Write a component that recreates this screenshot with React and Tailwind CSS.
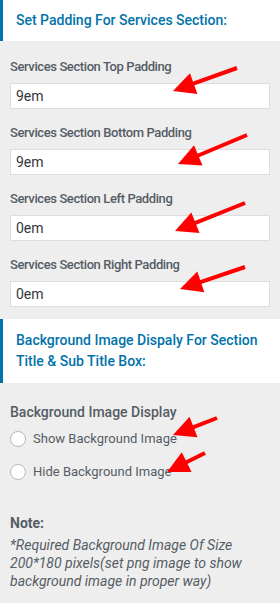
import React from "react";

const arrows = [
  [237, 68, 173, 91],
  [247, 135, 178, 164],
  [245, 203, 175, 231],
  [245, 267, 180, 289],
  [217, 418, 173, 435],
  [205, 453, 167, 472],
];

function Arrow({ t }) {
  const [tx, ty, px, py] = t;
  const dx = tx - px;
  const dy = ty - py;
  const len = Math.hypot(dx, dy);
  const ux = dx / len;
  const uy = dy / len;
  const hl = 22;
  const hw = 11;
  const bx = px + ux * hl;
  const by = py + uy * hl;
  const nx = -uy;
  const ny = ux;
  const pts = `${px},${py} ${bx + nx * hw},${by + ny * hw} ${bx - nx * hw},${by - ny * hw}`;
  return (
    <g>
      <line x1={tx} y1={ty} x2={bx - ux * 2} y2={by - uy * 2} stroke="#ff0000" strokeWidth="4" />
      <polygon points={pts} fill="#ff0000" />
    </g>
  );
}

function Field({ label, value }) {
  return (
    <div className="flex flex-col">
      <div className="text-[13px] tracking-[-0.4px] leading-[20px] font-medium text-[#555d66]">{label}</div>
      <div className="mt-[6px] h-[26px] bg-white border border-[#dddddd] flex items-center px-[5px] text-[14px] text-[#32373c]">
        {value}
      </div>
    </div>
  );
}

function Radio({ label }) {
  return (
    <div className="flex items-center h-[24px]">
      <span className="w-[16px] h-[16px] rounded-full bg-white border border-[#b4b9be] shrink-0"></span>
      <span className="ml-[7px] text-[13px] text-[#555d66]">{label}</span>
    </div>
  );
}

export default function App() {
  return (
    <div
      className="relative w-[280px] h-[603px] bg-[#eeeeee] overflow-hidden"
      style={{ fontFamily: "Roboto, 'Liberation Sans', sans-serif" }}
    >
      <div className="bg-white border-l-[3px] border-[#0073aa] h-[41px] flex items-center pl-[13px] text-[14px] font-medium text-[#0073aa]">
        Set Padding For Services Section:
      </div>
      <div className="px-[10px] pt-[16px] flex flex-col gap-[14px]">
        <Field label="Services Section Top Padding" value="9em" />
        <Field label="Services Section Bottom Padding" value="9em" />
        <Field label="Services Section Left Padding" value="0em" />
        <Field label="Services Section Right Padding" value="0em" />
      </div>
      <div className="mt-[12px] bg-white border-l-[3px] border-[#0073aa] py-[11px] pl-[13px] pr-[10px] text-[14px] leading-[21px] font-medium text-[#0073aa]">
        Background Image Dispaly For Section Title &amp; Sub Title Box:
      </div>
      <div className="px-[10px] pt-[19px]">
        <div className="text-[14px] leading-[20px] font-medium text-[#555d66]">Background Image Display</div>
        <div className="mt-[5px] flex flex-col gap-[9px]">
          <Radio label="Show Background Image" />
          <Radio label="Hide Background Image" />
        </div>
        <div className="mt-[29px] text-[14px] leading-[20px] font-bold text-[#555d66]">Note:</div>
        <div className="mt-[3px] text-[14px] leading-[18px] italic text-[#555d66]">
          *Required Background Image Of Size 200*180 pixels(set png image to show background image in proper way)
        </div>
      </div>
      <svg className="absolute inset-0 pointer-events-none" width="280" height="603" viewBox="0 0 280 603">
        {arrows.map((a, i) => (
          <Arrow key={i} t={a} />
        ))}
      </svg>
    </div>
  );
}
